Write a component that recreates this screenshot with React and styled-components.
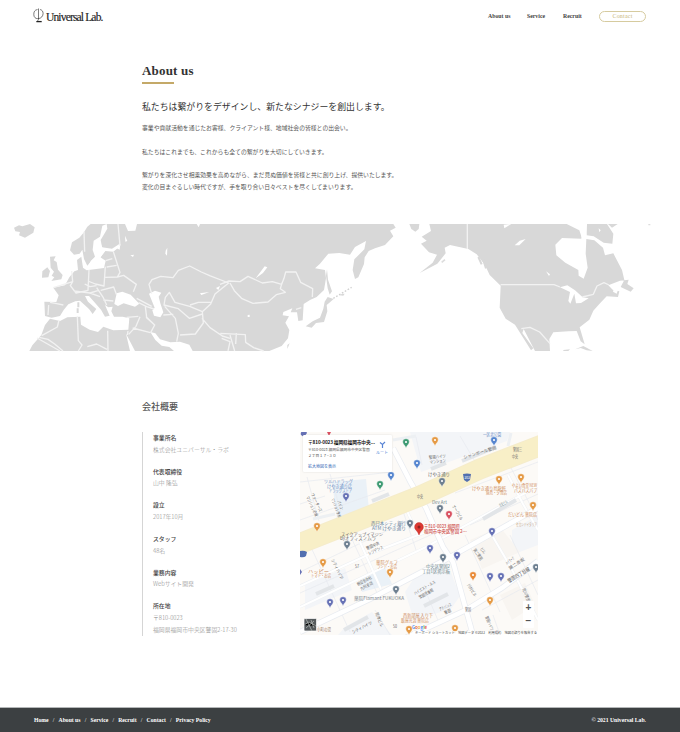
import React from "react";
import styled, { createGlobalStyle } from "styled-components";

const Global = createGlobalStyle`
  * { box-sizing: border-box; }
  body { margin: 0; background: #fff; color: #333; font-family: "Noto Sans CJK JP", sans-serif; }
  h1, h2, p, dl, dt, dd { margin: 0; }
`;

const serif = `"Liberation Serif", serif`;

const Page = styled.div`
  width: 680px; height: 732px; display: flex; flex-direction: column; overflow: hidden;
`;
const Header = styled.header`
  height: 32px; flex: none; padding: 0 34px 0 33px; display: flex; align-items: center; justify-content: space-between;
`;
const Logo = styled.div`
  display: flex; align-items: center; gap: 1px; height: 32px;
  font: 11.5px/18px ${serif}; letter-spacing: -0.84px; color: #222; -webkit-text-stroke: 0.15px #222;
  white-space: nowrap;
  span { padding-top: 2px; }
`;
const Nav = styled.nav`
  display: flex; align-items: center; font: bold 5.8px/12px ${serif}; color: #444; white-space: nowrap;
`;
const NavLink = styled.span`
  width: ${(p) => p.$w}px;
`;
const ContactPill = styled.span`
  width: 47px; height: 11px; border: 1px solid #d6cb9f; border-radius: 6px;
  display: flex; align-items: center; justify-content: center; color: #c8b67c; font-weight: normal; font-size: 6px; letter-spacing: 0.2px;
`;
const Intro = styled.section`
  height: 192px; flex: none; padding: 30px 0 0 142px; white-space: nowrap;
`;
const Title = styled.h1`
  font: bold 13px/18px ${serif}; letter-spacing: 0.18px; color: #333;
`;
const Rule = styled.div`
  width: 32px; height: 2px; margin-top: 2px; background: #c4a968;
`;
const Lead = styled.h2`
  margin-top: 14px; font-size: 8.9px; line-height: 18px; font-weight: 400; color: #333;
`;
const Copy = styled.p`
  margin-top: ${(p) => p.$top}px; font-size: 5.83px; line-height: 11.7px; color: #555;
`;
const WorldMap = styled.svg`
  display: block; width: 680px; height: 128px; flex: none;
`;
const Company = styled.section`
  height: 355px; flex: none; padding: 46px 0 0 142px;
`;
const SectionTitle = styled.h2`
  font-size: 9px; line-height: 18px; font-weight: 500; color: #555;
`;
const Columns = styled.div`
  display: flex; margin-top: 16px;
`;
const Facts = styled.dl`
  width: 158px; height: 204px; border-left: 1px solid #d5d5d5; padding-left: 10px; white-space: nowrap;
`;
const Fact = styled.div`
  height: 33.65px; font-size: 5.85px; line-height: 11.8px;
  dt { font-weight: 500; color: #444; }
  dd { color: #888; font-weight: 300; }
`;
const StreetMap = styled.div`
  position: relative; width: 238px; height: 203px; overflow: hidden;
`;
const Streets = styled.svg`
  display: block; width: 238px; height: 203px;
  text { font-family: "Noto Sans CJK JP", sans-serif; }
`;
const PlaceCard = styled.div`
  position: absolute; left: 3px; top: 3px; width: 89px; height: 37px; padding: 2px 4px 0 5px;
  background: #fff; border-radius: 1px; box-shadow: 0 0 2px #0002; display: flex; justify-content: space-between;
  white-space: nowrap;
`;
const CardText = styled.div`
  font-size: 3.75px; color: #555; line-height: 6px; width: 64px;
  b { display: block; font-size: 4.7px; line-height: 10px; color: #111; letter-spacing: -0.1px; }
  em { display: block; margin-top: 4px; font-size: 4px; font-style: normal; color: #3467b5; }
`;
const Route = styled.div`
  font-size: 4px; line-height: 6px; color: #4d82d4; padding-top: 4px; text-align: center;
  svg { display: block; margin: 0 auto; }
`;
const ZoomControl = styled.div`
  position: absolute; right: 4px; top: 169px; width: 11px; height: 27px; background: #fff;
  display: grid; grid-template-rows: 1fr 1fr; place-items: center; border-radius: 1px;
  font: bold 10px/12px "Liberation Sans", sans-serif; color: #555;
`;
const Footer = styled.footer`
  height: 25px; flex: none; background: #3c4042; border-top: 1px solid #b4b7b8; color: #fff;
  padding: 0 34px; display: flex; align-items: center; justify-content: space-between;
  font: bold 5.7px/12px ${serif}; white-space: nowrap;
`;
const FooterLinks = styled.div`
  display: flex;
  span + span::before { content: "/"; display: inline-block; width: 10px; text-align: center; font-weight: 400; }
`;

const land = [
  // Iceland, Britain and Ireland
  "M42,38L57,31L67,34L90,27L104,37L100,53L75,68L57,61L60,51L46,49Z",
  "M150,125L167,124L161,136L170,141L174,164L188,180L184,193L154,198L163,187L155,182L162,170L152,158Z",
  "M127,169L142,157L150,168L145,187L126,188Z",
  // Scandinavia
  "M272,27L262,35L252,52L238,68L216,82L210,106L222,119L239,116L247,104L252,132L262,152L274,137L285,125L278,105L281,77L300,65L307,32L320,27L322,41L302,75L306,97L336,101L358,87L372,27Z",
  // Eurasia
  "M354,27L375,27L384,48L406,47L411,27L1180,27L1187,38L1170,47L1180,64L1155,90L1125,100L1106,108L1094,127L1092,147L1075,187L1065,192L1058,165L1063,133L1093,103L1098,78L1065,96L1050,119L1018,114L985,116L960,146L945,160L975,165L978,190L972,225L950,246L930,255L911,267L908,316L895,318L891,292L872,292L877,280L850,291L848,301L867,304L856,323L868,345L864,370L845,393L808,408L578,408L568,389L540,380L511,382L480,373L466,355L451,351L466,375L485,392L508,396L522,408L405,408L378,356L390,408L88,408L97,391L124,360L135,330L150,311L180,318L202,307L241,305L243,329L269,344L294,351L310,335L340,346L385,344L388,310L368,305L342,305L334,289L338,275L325,277L315,270L329,302L315,305L303,284L286,265L267,243L255,243L264,260L289,282L278,297L267,282L240,257L226,259L205,268L191,285L180,303L155,308L135,303L133,260L169,261L176,241L160,218L195,211L208,187L223,169L234,165L231,135L244,125L249,158L260,166L312,159L317,137L301,127L316,108L340,110L360,94Z",
  "M981,163L984,194L996,229L989,239L983,220L978,182Z",
  "M974,260L983,246L1001,252L990,262L980,270L982,289L972,321L948,324L935,338L917,334L938,319L960,308L970,281Z",
  // North America
  "M1288,27L1293,48L1265,65L1280,77L1263,86L1287,112L1311,119L1298,143L1259,174L1312,146L1337,115L1334,98L1350,90L1405,102L1430,118L1455,150L1469,180L1502,212L1499,278L1517,311L1545,329L1593,406L1600,400L1567,354L1571,342L1605,408L1650,408L1648,372L1660,352L1705,349L1730,348L1742,379L1754,388L1739,337L1768,314L1780,287L1798,267L1820,244L1854,246L1858,229L1838,224L1825,211L1860,197L1886,194L1882,207L1901,220L1892,230L1862,216L1873,195L1866,165L1840,115L1815,121L1809,98L1783,76L1759,72L1757,116L1763,158L1751,191L1736,182L1735,165L1696,143L1669,121L1666,89L1686,69L1744,71L1745,27Z",
  "M1761,27L1821,27L1840,56L1837,86L1811,83L1781,64L1760,61Z",
  "M1725,403L1750,393L1778,408L1760,406L1742,399Z M1690,405L1710,403L1705,408L1690,408Z M1824,27L1853,27L1836,38Z",
  // Bering coast and small islands
  "M1228,27L1258,27L1256,42L1246,50L1234,42Z",
  "M1018,241L1025,237L1034,236L1030,242Z M862,390L869,385L862,402Z"
];
const water = [
  "M343,267L350,235L367,230L392,239L418,266L405,275L371,265L354,273Z",
  "M447,236L465,227L484,233L476,245L481,265L490,292L481,307L462,302L457,286L464,278Z",
  "M497,107L502,98L501,122L496,116Z M349,99L361,87L359,104Z M391,121L402,119L399,126Z",
  "M600,235L628,231L604,240Z M648,219L660,213L655,225Z M767,190L794,154L802,157L789,174Z",
  "M1544,91L1559,77L1577,72L1558,91Z M1638,169L1650,178L1647,183Z",
  "M1680,217L1702,211L1725,226L1748,247L1766,250L1743,264L1728,265L1723,236L1711,266L1705,258L1710,231Z",
  "M300,78L306,97L317,105L301,128L295,154L260,163L273,137L286,126Z",
  "M1700,27L1755,27L1759,60L1745,67L1738,46Z M1511,29L1534,27L1513,40Z",
  "M590,27L596,37L600,27Z M743,300L749,299L749,306L743,306Z",
  "M375,62L382,78L376,80Z M1796,40L1802,46L1798,52Z",
  "M1844,208L1862,202L1850,236L1839,230Z"
];
const borders = "M252,50L254,110M354,27L360,92M215,168L218,200L211,212L228,234L264,226L267,164M218,200L160,218M264,198L286,207L312,213L316,155M254,207L270,215L290,212M222,228L270,234L296,226M270,234L300,245M316,187L352,186L371,181L409,208L400,230M302,226L341,216L350,240M290,218L310,248L320,270M310,255L340,258M340,110L360,172L352,186M317,137L337,131M320,156L350,151M150,262L170,266L190,270M146,270L144,300M416,263L440,275L462,282M410,250L455,274M455,236L447,208L456,194L482,184L519,188L535,166L569,153L604,171L629,182L686,204L645,237L632,267L607,290L569,274L525,262L508,232L496,247L492,270L535,281L568,310L607,297M570,270L595,262L632,262M494,274L526,310L535,355L530,380M607,290L610,324L586,357L540,360M606,310L630,338L667,363L690,370M436,275L440,307L464,330L452,353M415,304L380,307M420,305L408,334L386,358M398,339L451,353M438,307L464,330M490,300L520,298M384,348L382,360M177,315L172,336L125,362M232,304L235,377L246,390L235,408M323,347L324,408M111,369L180,408M118,367L144,373L164,387L189,408M262,395L290,387L321,403M660,208L687,198L720,200L744,184L787,204L817,200L845,208L852,190L857,171L888,171L902,202L938,221L937,246M690,204L703,227L726,251L759,265L804,261L829,239L856,232L841,221L846,204M661,355L736,359L737,382L761,398L791,408M665,370L690,380L684,408M690,360L704,408M709,355L707,387M1402,27L1402,102M1502,209L1662,209L1680,216M1747,246L1780,238L1791,213L1812,203L1827,210M1564,341L1590,337L1619,351L1650,386M888,283L904,278";

const WorldDrawing = () => (
  <WorldMap viewBox="0 27 2040 384" preserveAspectRatio="none">
    <g fill="#d8d8d8">{land.map((d) => <path key={d} d={d} />)}</g>
    <g fill="#fff">{water.map((d) => <path key={d} d={d} />)}</g>
    <path d={borders} fill="none" stroke="#f2f2f2" strokeWidth="4" strokeLinejoin="round" />
    <path d="M235,262v15M233,280v14M1435,126l10,22M1450,135l8,25M236,140l10,20" stroke="#d8d8d8" strokeWidth="6" />
    <path d="M1000,250L1055,217" stroke="#d0d0d0" strokeWidth="4" strokeDasharray="5 5" />
    <path d="M1945,28h6M1325,142l10,-8" stroke="#ddd" strokeWidth="5" />
  </WorldMap>
);

const orange = "#e59a45", indigo = "#6671b5", slate = "#6d7f90", green = "#3d9a72", blue = "#5585cf";
const pins = [
  [406, 443, green], [380, 485, green], [391, 476, blue], [417, 464, blue], [346, 497, indigo],
  [435, 441, orange], [494, 441, blue], [442, 482, slate], [499, 480, orange], [521, 478, orange],
  [440, 509, slate], [449, 515, "#d85060"], [410, 524, slate], [317, 527, orange], [533, 506, orange],
  [492, 532, indigo], [347, 545, slate], [323, 563, orange], [390, 573, orange], [396, 590, slate],
  [343, 601, indigo], [330, 603, indigo], [430, 549, indigo], [443, 558, slate], [457, 556, indigo],
  [473, 576, "#e98b38"], [490, 577, indigo], [501, 577, indigo], [536, 568, slate], [490, 601, orange],
  [455, 629, orange], [409, 630, orange]
];

// x, baseline, text, colour, length, rotation
const label = "#6b6b6b", shop = "#cf8d5b", link = "#6b8dc4", teal = "#72898c";
const labels = [
  [324, 483, "ツルハドラッグ", link, 29, 0], [327, 487.5, "けやき通り店", link, 25, 0], [329, 491.5, "ドラッグストア", link, 23, 0],
  [429, 459, "警固ハイツ", label, 17, -5], [430, 464, "マンション", label, 16, -8],
  [464, 459, "シャンボール警固", label, 34, -17], [483, 436, "一区北公園", link, 18, 0], [513, 451, "警固三", label, 9, 0],
  [428, 476, "けやき通り", label, 22, 0], [472, 490, "けやき通り鳥龍軒", shop, 34, 0], [486, 494, "焼鳥・夕食店", shop, 21, 0],
  [512, 487, "やよい食堂 NEW", shop, 25, 0], [514, 492, "パスパスパブ", shop, 23, 0], [432, 504, "Dev Art", teal, 15, 0],
  [508, 516, "だいどん 薬院店", shop, 29, 0], [516, 526, "セカンドイタリア", "#c6a486", 21, 0],
  [452, 506, "オークビル", label, 17, 60], [500, 507, "北生ビル", teal, 9, -28],
  [311, 494, "ウォーターズ", label, 20, 65], [306, 497, "マンション赤坂", label, 22, 65], [337, 501, "パイン", label, 10, 68], [331, 499, "マンション浄水", label, 20, 68],
  [371, 525, "西日本シティ銀行", "#66839c", 35, 0], [372, 529.5, "ATM けやき通り", "#66839c", 34, 0],
  [341, 535.5, "スイクアップイマジン", label, 42, 0], [340, 540, "byオフィスノムラ", label, 36, 0],
  [367, 550, "警固中央", label, 14, -24], [369, 555, "レジデンス", label, 16, -24],
  [308, 573, "ハッピー", shop, 21, 0], [311, 577, "トマト・お店", shop, 20, 0], [331, 560, "シティハイツ", label, 22, 63],
  [376, 563.5, "薬院グルフ", shop, 22, 0], [377, 568, "ランド・お店", shop, 20, 0], [358, 586, "朝日生命社", label, 16, -28], [361, 590.5, "九州支店", label, 14, -28],
  [317, 630.5, "小町の湯", "#9c795f", 14, 0],
  [353, 634, "シティハイツ", label, 22, -28], [375, 613, "荒津ビル", label, 15, 68],
  [403, 617, "西新部屋 入り下", shop, 30, 0], [401, 622, "飯屋光涯 薬院店", shop, 28, 0],
  [426, 567.5, "中央区警固2", teal, 24, 0], [422, 572.5, "丁目1区掲示板", teal, 28, 0],
  [473, 550, "第二警固", label, 13, 55], [480, 549, "ビル", label, 6, 55],
  [415, 595, "ハイエスト・ルス", label, 24, -30], [420, 599, "警固弐番館", label, 16, -30],
  [467, 585, "川村ビル", label, 14, 58], [440, 611, "アドバンス", label, 13, -24], [445, 614.5, "警固", label, 7, -24],
  [507, 565, "ハイラーク", label, 10, -38], [510, 570, "第二赤坂", label, 18, -34], [522, 589, "荒川警固", label, 14, 67], [485, 617, "警固ハイツ", label, 15, 66],
  [465, 611, "警固", label, 6, 0], [417, 498, "中央", label, 6, 0], [512, 458, "中央", label, 6, 0],
  [355, 568, "57", label, 4, 0], [393, 628, "50", label, 4, 0]
];

const StreetDrawing = () => (
  <Streets viewBox="300 432 238 203">
    <rect x="300" y="432" width="238" height="203" fill="#fcfaf7" />
    <path d="M410,432H510L507,441L421,472Z M418,572L447,562L460,596L451,609L414,620L405,592Z M345,627L372,612L392,635H338Z M512,530L538,515V545L512,555Z M305,585L345,568L352,590L305,610Z" fill="#f3f5f8" />
    <path d="M332,482L366,479L369,510L337,519Z M360,578L385,568L392,584L362,592Z" fill="#eaf1f7" />
    <path d="M470,540L500,527L520,552L482,569Z M500,595L525,583L535,605L512,620Z" fill="#f8f5f1" />
    <path d="M300,482L392,472M300,504L325,496M300,520L385,490M330,474L341,512M307,477L319,521M310,545L350,632M350,535L378,595M400,502L416,550M300,572L405,522M300,593L435,533M416,437L422,465M460,436L476,463M509,464L538,520M455,493L538,462M470,525L538,494M465,535L500,612M510,535L538,595M482,610L538,580M432,498L470,483M493,615L500,635M375,610L390,635M425,590L440,625" fill="none" stroke="#e6eaef" strokeWidth=".7" />
    <path d="M300,607L426,547L538,486M300,586L374,552L426,532M393,448L411,483M426,508L443,547L453,562L463,599L473,635M511,433L508,446M508,475L523,504L538,530M493,537L510,566L538,620M360,542L381,589M402,500L418,535M335,514L313,519M416,436L393,440" fill="none" stroke="#edf0f3" strokeWidth="3" />
    <path d="M300,607L426,547L538,486M300,586L374,552L426,532M508,475L523,504L538,530M493,537L510,566L538,620M360,542L381,589M402,500L418,535" fill="none" stroke="#fff" strokeWidth="2" />
    <path d="M300,632L370,599L443,561L484,538L538,508M390,645L466,610L502,588L538,561M393,448L411,483L426,508L443,547L453,562L463,599L473,635" fill="none" stroke="#e9ecf1" strokeWidth="6" />
    <path d="M300,632L370,599L443,561L484,538L538,508M390,645L466,610L502,588L538,561M393,448L411,483L426,508L443,547L453,562L463,599L473,635" fill="none" stroke="#fff" strokeWidth="4.5" />
    <path d="M291,547L420,496L480,469L547,443" fill="none" stroke="#f5eccb" strokeWidth="21" />
    <path d="M291,547L420,496L480,469L547,443" fill="none" stroke="#f8efc7" strokeWidth="19" />
    <path d="M372,501l17,-7M462,461l34,-14M431,469l15,-6M483,519l33,-19M424,606l24,-12M344,630l24,-13M316,594l18,-8" stroke="#e2e5e8" strokeWidth="4" />
    {labels.map(([x, y, text, color, length, rotate]) => (
      <text key={`${x}-${y}`} x={x} y={y} fill={color} fontSize="4.3" textLength={length} lengthAdjust="spacingAndGlyphs" transform={`rotate(${rotate} ${x} ${y})`}>{text}</text>
    ))}
    <text x="354" y="600" fontSize="5" fill="#7c858c" textLength="50" lengthAdjust="spacingAndGlyphs">薬院Flamant FUKUOKA</text>
    <text x="509" y="583" fontSize="5.2" fill="#555" textLength="25" lengthAdjust="spacingAndGlyphs" transform="rotate(-31 509 583)">警固四丁目線</text>
    {pins.map(([x, y, fill]) => (
      <g key={`${x}-${y}`}>
        <path d={`M${x} ${y + 5}C${x - 1} ${y + 2} ${x - 3.3} ${y + 1} ${x - 3.3} ${y - 1}A3.3 3.3 0 1 1 ${x + 3.3} ${y - 1}C${x + 3.3} ${y + 1} ${x + 1} ${y + 2} ${x} ${y + 5}Z`} fill={fill} stroke="#fff" strokeWidth=".4" />
        <circle cx={x} cy={y - 1} r="1.1" fill="#fff" />
      </g>
    ))}
    <path d="M301,435A3,3 0 0 1 307,433L304,437Z M300,569v6l2,-3Z" fill={indigo} />
    <path d="M327,432h4l-2,4Z" fill="#d85060" />
    <path d="M463,474q4,-1 8,0l-1,6l-3,2l-3,-2Z M300,551q4,-1 7,1l-1,4q-2,2,-6,1Z" fill="#526faf" />
    <text x="464.5" y="479" fontSize="3.3" fill="#fff">202</text>
    <path d="M419,535Q418,532 415.8,530A4.4,4.4 0 1 1 422.2,530Q420,532 419,535Z" fill="#dc3931" stroke="#b92d2a" strokeWidth=".4" />
    <circle cx="419" cy="527" r="1.5" fill="#912321" />
    <text x="424" y="528" fontSize="4.6" fontWeight="500" fill="#cf504d" textLength="36" lengthAdjust="spacingAndGlyphs">〒810-0023 福岡県</text>
    <text x="424" y="533" fontSize="4.6" fontWeight="500" fill="#cf504d" textLength="43" lengthAdjust="spacingAndGlyphs">福岡市中央区警固 2⋯</text>
    <rect x="413" y="631" width="126" height="4" fill="#ffffffd8" />
    <text x="415" y="634.2" fontSize="3.4" fill="#444" textLength="122" lengthAdjust="spacingAndGlyphs">キーボード ショートカット　地図データ ©2022　利用規約　地図の誤りを報告する</text>
    <text x="412" y="629" fontSize="5" fontWeight="500" textLength="15" lengthAdjust="spacingAndGlyphs">
      <tspan fill="#4285f4">G</tspan><tspan fill="#ea4335">o</tspan><tspan fill="#edac24">o</tspan><tspan fill="#4285f4">g</tspan><tspan fill="#34a853">l</tspan><tspan fill="#ea4335">e</tspan>
    </text>
    <rect x="304" y="618.5" width="12.5" height="12.5" rx="1" fill="#555a5c" stroke="#fff" strokeWidth=".7" />
    <path d="M304,625l5,-3l7,4M306,619l6,12M311,620l3,8M306,628l8,-7" stroke="#aeb4b1" strokeWidth=".8" />
  </Streets>
);

const facts = [
  ["事業所名", ["株式会社ユニバーサル・ラボ"]],
  ["代表取締役", ["山中 隆弘"]],
  ["設立", ["2017年10月"]],
  ["スタッフ", ["48名"]],
  ["業務内容", ["Webサイト開発"]],
  ["所在地", ["〒810-0023", "福岡県福岡市中央区警固2-17-30"]]
];

export default function App() {
  return (
    <Page>
      <Global />
      <Header>
        <Logo>
          <svg width="12" height="16" viewBox="0 0 12 16" fill="none" stroke="#222">
            <path d="M4.5 1.5C1.5 2 .8 4 .8 6.5c0 2.8 1.8 4.2 4 4.2 3.6 0 5.3-3 5.3-5.2 0-2.3-1.3-3.6-3-4" strokeWidth=".6" />
            <path d="M5.5 .5v11L3.8 14" strokeWidth=".6" />
            <path d="M3.4 13.6h5.3" strokeWidth="1.3" />
          </svg>
          <span>Universal Lab.</span>
        </Logo>
        <Nav>
          <NavLink $w={39}>About us</NavLink><NavLink $w={36}>Service</NavLink><NavLink $w={36}>Recruit</NavLink>
          <ContactPill>Contact</ContactPill>
        </Nav>
      </Header>
      <Intro>
        <Title>About us</Title>
        <Rule />
        <Lead>私たちは繋がりをデザインし、新たなシナジーを創出します。</Lead>
        <Copy $top={6.3}>事業や貢献活動を通じたお客様、クライアント様、地域社会の皆様との出会い。</Copy>
        <Copy $top={11.7}>私たちはこれまでも、これからも全ての繋がりを大切にしていきます。</Copy>
        <Copy $top={11.7}>繋がりを深化させ相乗効果を高めながら、まだ見ぬ価値を皆様と共に創り上げ、提供いたします。<br />変化の目まぐるしい時代ですが、手を取り合い日々ベストを尽くしてまいります。</Copy>
      </Intro>
      <WorldDrawing />
      <Company>
        <SectionTitle>会社概要</SectionTitle>
        <Columns>
          <Facts>
            {facts.map(([term, lines]) => (
              <Fact key={term}><dt>{term}</dt>{lines.map((line) => <dd key={line}>{line}</dd>)}</Fact>
            ))}
          </Facts>
          <StreetMap>
            <StreetDrawing />
            <PlaceCard>
              <CardText><b>〒810-0023 福岡県福岡市中央...</b>〒810-0023 福岡県福岡市中央区警固<br />２丁目１７−３０<em>拡大地図を表示</em></CardText>
              <Route>
                <svg width="7" height="8" viewBox="0 0 7 8" fill="none" stroke="#5884d4"><path d="M1 1.5l2.5 2L6 1M3.5 3.5V7" strokeWidth="1.2" /></svg>
                ルート
              </Route>
            </PlaceCard>
            <ZoomControl><span>+</span><span>−</span></ZoomControl>
          </StreetMap>
        </Columns>
      </Company>
      <Footer>
        <FooterLinks>
          {["Home", "About us", "Service", "Recruit", "Contact", "Privacy Policy"].map((name) => <span key={name}>{name}</span>)}
        </FooterLinks>
        <span>© 2021 Universal Lab.</span>
      </Footer>
    </Page>
  );
}
